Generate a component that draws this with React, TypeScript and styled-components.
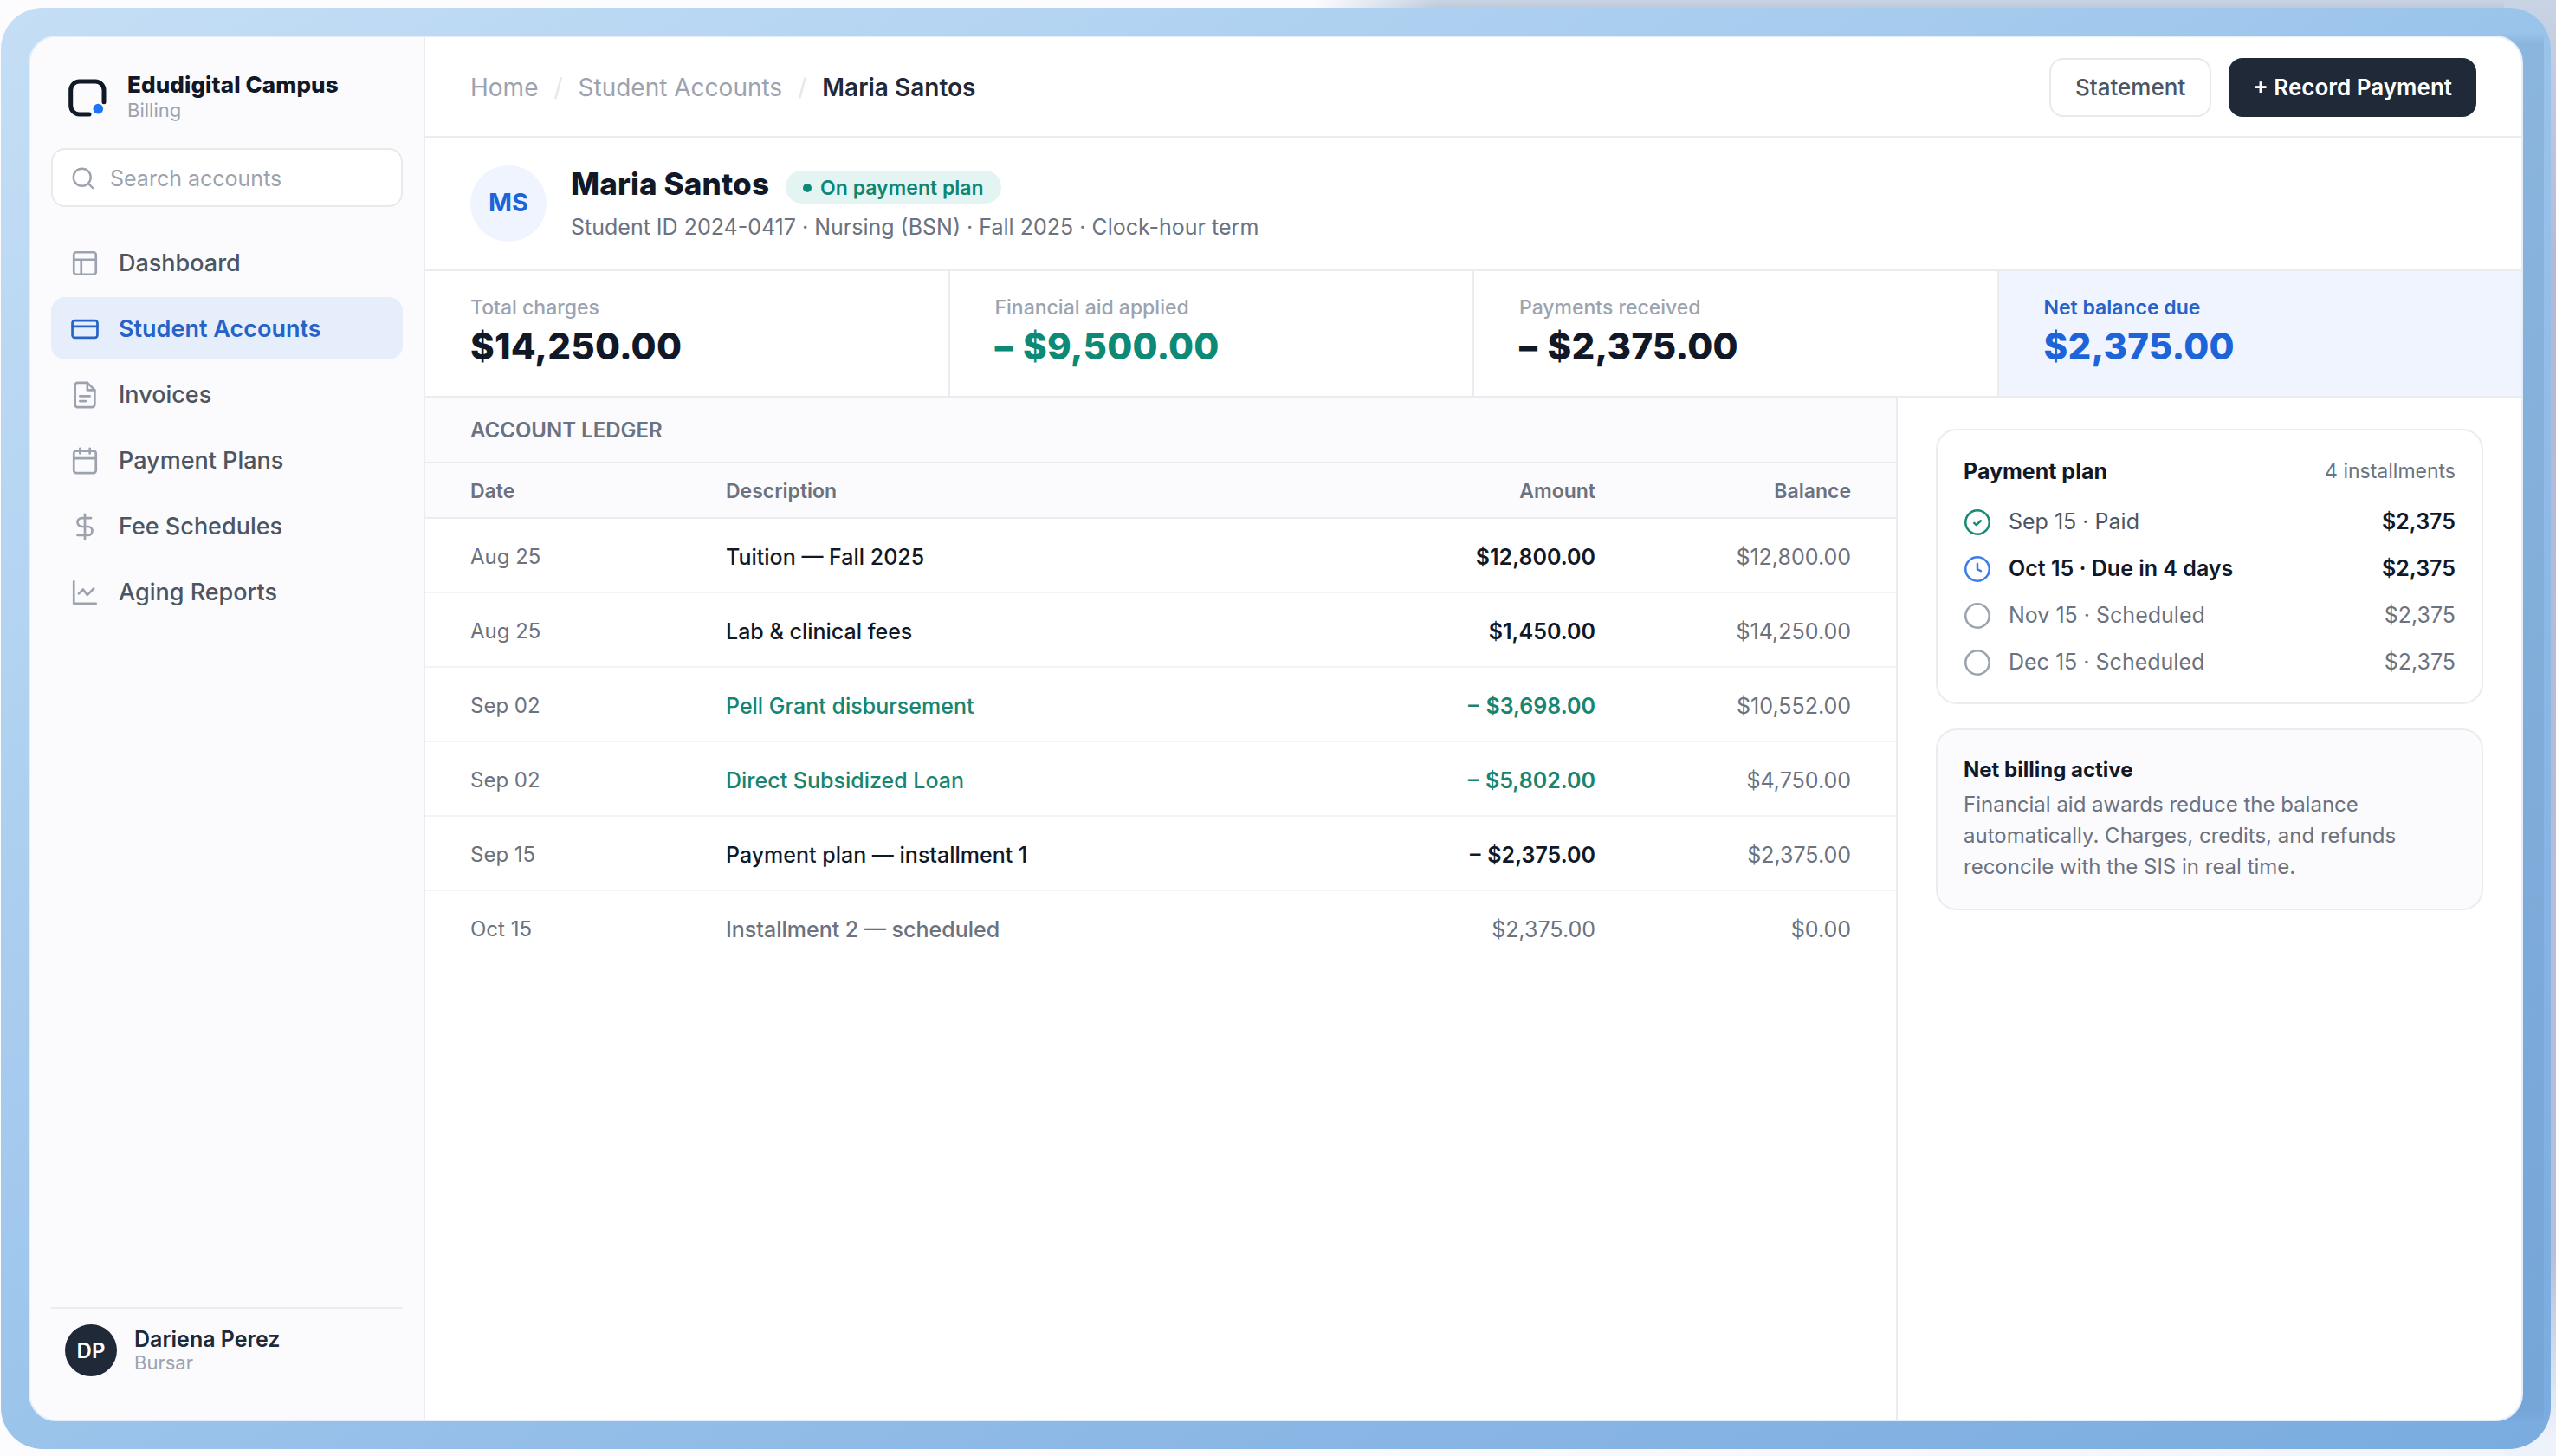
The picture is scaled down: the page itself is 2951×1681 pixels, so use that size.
import styled, { createGlobalStyle, css } from "styled-components";

const GlobalStyle = createGlobalStyle`
  * {
    box-sizing: border-box;
  }

  body {
    margin: 0;
    background: #fcfcfe;
    font-family: Inter, "Liberation Sans", sans-serif;
    color: #111827;
    -webkit-font-smoothing: antialiased;
  }
`;

const Backdrop = styled.div`
  width: 2951px;
  height: 1681px;
  padding: 9px 6px 8px 1px;
  overflow: hidden;
  background:
    linear-gradient(180deg, #c8d3e4 0, #b3bad8 300px, #b7bfdc 1450px, #eef2fa 1660px) 100% 0 / 60px 100% no-repeat,
    linear-gradient(90deg, #fcfcfe 1515px, rgba(252, 252, 254, 0) 1660px) 0 0 / 100% 60px no-repeat,
    linear-gradient(180deg, #c8d3e4 0, #bec8dc 10px) 0 0 / 100% 60px no-repeat,
    linear-gradient(90deg, #fcfcfe 40%, #f1f4fb);
`;

const Frame = styled.div`
  position: relative;
  height: 1664px;
  padding: 32px;
  border-radius: 48px;
  background: linear-gradient(to bottom right, #c5def5 0%, #b0d2f1 25%, #9bc4eb 50%, #8ab6e5 75%, #7aacdf 100%);

  &::after {
    content: "";
    position: absolute;
    top: 28px;
    right: 8px;
    bottom: 30px;
    width: 50px;
    background: linear-gradient(180deg, rgba(86, 130, 170, 0), rgba(86, 130, 170, 0.22) 14px, rgba(86, 130, 170, 0.16) calc(100% - 14px), rgba(86, 130, 170, 0));
  }
`;

const Window = styled.div`
  position: relative;
  z-index: 1;
  display: flex;
  height: 1600px;
  border: 2px solid #e4eefa;
  border-radius: 32px;
  background: #fff;
  overflow: hidden;
`;

const Sidebar = styled.aside`
  display: flex;
  flex-direction: column;
  width: 456px;
  padding: 36px 24px 50px;
  border-right: 2px solid #ebecef;
  background: #fbfbfd;
`;

const Brand = styled.div`
  display: flex;
  align-items: center;
  gap: 20px;
  height: 60px;
  padding-left: 16px;
`;

const BrandText = styled.div`
  padding-top: 2px;
`;

const BrandName = styled.div`
  font-size: 26px;
  font-weight: 800;
  line-height: 33px;
  letter-spacing: 0.1px;
`;

const SmallNote = styled.div`
  font-size: 22px;
  line-height: 26px;
  color: #9ca3af;
`;

const Search = styled.div`
  display: flex;
  align-items: center;
  gap: 16px;
  height: 68px;
  margin: 32px 0 28px;
  padding: 1px 20px 0;
  border: 2px solid #e8e9ec;
  border-radius: 16px;
  background: #fff;
  font-size: 25px;
  color: #9ca3af;
`;

const Nav = styled.nav`
  display: flex;
  flex-direction: column;
  gap: 4px;
`;

const NavItem = styled.a<{ $active?: boolean }>`
  display: flex;
  align-items: center;
  gap: 22px;
  height: 72px;
  padding: 1px 22px 0;
  border-radius: 16px;
  font-size: 27px;
  font-weight: 500;
  color: #4b5563;

  svg {
    color: #9ca3af;
  }

  ${({ $active }) =>
    $active &&
    css`
      background: #e7eefb;
      font-weight: 600;
      color: #2563c9;

      svg {
        color: #2563c9;
      }
    `}
`;

const Profile = styled.div`
  display: flex;
  align-items: center;
  gap: 20px;
  margin-top: auto;
  padding: 18px 16px 0;
  border-top: 2px solid #ebecef;
`;

const ProfileAvatar = styled.div`
  display: grid;
  place-items: center;
  width: 60px;
  height: 60px;
  border-radius: 50%;
  background: #1f2937;
  font-size: 24px;
  font-weight: 600;
  color: #fff;
`;

const ProfileName = styled.div`
  font-size: 25px;
  font-weight: 600;
  line-height: 28px;
  color: #1f2937;
`;

const Main = styled.main`
  display: flex;
  flex-direction: column;
  flex: 1;
`;

const TopBar = styled.header`
  display: flex;
  align-items: center;
  justify-content: space-between;
  height: 116px;
  padding: 2px 52px 0;
  border-bottom: 2px solid #ebecef;
`;

const Breadcrumb = styled.div`
  display: flex;
  gap: 18px;
  font-size: 28px;
  color: #9ca3af;

  i {
    font-style: normal;
    color: #e5e7eb;
  }

  b {
    font-weight: 600;
    color: #1f2937;
  }
`;

const Actions = styled.div`
  display: flex;
  gap: 20px;
`;

const Button = styled.button<{ $primary?: boolean }>`
  height: 68px;
  padding: 0 ${({ $primary }) => ($primary ? 26 : 28)}px 2px;
  border: 2px solid ${({ $primary }) => ($primary ? "#1f2937" : "#e8e9ec")};
  border-radius: 16px;
  background: ${({ $primary }) => ($primary ? "#1f2937" : "#fff")};
  font-family: inherit;
  font-size: 26px;
  font-weight: ${({ $primary }) => ($primary ? 600 : 500)};
  color: ${({ $primary }) => ($primary ? "#fff" : "#4b5563")};
  white-space: nowrap;
`;

const StudentHeader = styled.section`
  display: flex;
  align-items: center;
  gap: 28px;
  height: 154px;
  padding: 0 52px;
  border-bottom: 2px solid #ebecef;
`;

const StudentAvatar = styled.div`
  display: grid;
  place-items: center;
  width: 88px;
  height: 88px;
  padding-bottom: 4px;
  border-radius: 50%;
  background: #eff4fe;
  font-size: 29px;
  font-weight: 700;
  color: #1d64d8;
`;

const StudentInfo = styled.div`
  padding-bottom: 2px;
`;

const NameRow = styled.div`
  display: flex;
  align-items: flex-start;
  gap: 19px;
`;

const StudentName = styled.h1`
  margin: 0;
  font-size: 35px;
  font-weight: 800;
  line-height: 44px;
  letter-spacing: 0.15px;
`;

const Badge = styled.span`
  display: flex;
  align-items: center;
  gap: 10px;
  height: 38px;
  margin-top: 7px;
  padding: 1px 20px 0;
  border-radius: 19px;
  background: #e3f4f2;
  font-size: 23px;
  font-weight: 600;
  color: #0f8573;

  &::before {
    content: "";
    width: 10px;
    height: 10px;
    border-radius: 50%;
    background: #0d8a76;
  }
`;

const StudentMeta = styled.div`
  margin-top: 11px;
  font-size: 25px;
  line-height: 32px;
  color: #6b7280;
`;

const Stats = styled.section`
  display: grid;
  grid-template-columns: repeat(4, 1fr);
  gap: 2px;
  height: 146px;
  border-bottom: 2px solid #ebecef;
  background: #ebecef;
`;

const Stat = styled.div<{ $tone?: "green" | "blue" }>`
  padding: 28px 52px 0;
  color: ${({ $tone }) => ($tone === "green" ? "#0d8a76" : $tone === "blue" ? "#1d64d8" : "#111827")};
  background: ${({ $tone }) => ($tone === "blue" ? "#eff4fe" : "#fff")};
`;

const StatLabel = styled.div<{ $strong?: boolean }>`
  font-size: 23px;
  font-weight: ${({ $strong }) => ($strong ? 600 : 500)};
  line-height: 28px;
  color: ${({ $strong }) => ($strong ? "#2563c9" : "#9ca3af")};
`;

const StatValue = styled.div`
  margin-top: 3px;
  font-size: 42px;
  font-weight: 800;
  line-height: 56px;
  letter-spacing: 0.2px;
  word-spacing: 2px;
`;

const Content = styled.div`
  display: flex;
  flex: 1;
`;

const Ledger = styled.section`
  flex: 1;
  border-right: 2px solid #ebecef;
`;

const LedgerTitle = styled.div`
  height: 76px;
  padding: 1px 52px 0;
  border-bottom: 2px solid #ebecef;
  background: #fbfbfd;
  font-size: 24px;
  font-weight: 600;
  line-height: 74px;
  color: #6b7280;
`;

const LedgerGrid = styled.div`
  display: grid;
  grid-template-columns: 295px 1fr 295px 295px;
  align-items: center;
  padding: 1px 52px 0;

  & > :nth-child(n + 3) {
    text-align: right;
  }
`;

const LedgerHead = styled(LedgerGrid)`
  height: 64px;
  border-bottom: 2px solid #ebecef;
  background: #fbfbfd;
  font-size: 23px;
  font-weight: 600;
  color: #6b7280;
`;

const toneColors = {
  dark: "#111827",
  green: "#17856f",
  muted: "#6b7280",
};

const LedgerRow = styled(LedgerGrid)<{ $tone: keyof typeof toneColors }>`
  height: 86px;
  padding-top: 3px;
  border-bottom: 2px solid #f2f3f5;
  font-size: 25px;
  color: #6b7280;

  &:last-child {
    border-bottom-color: transparent;
  }

  & > :nth-child(1) {
    font-size: 24px;
  }

  & > :nth-child(2) {
    font-weight: 500;
    color: ${({ $tone }) => toneColors[$tone]};
  }

  & > :nth-child(3) {
    font-weight: ${({ $tone }) => ($tone === "muted" ? 400 : 600)};
    color: ${({ $tone }) => toneColors[$tone]};
    word-spacing: 1.5px;
  }
`;

const SidePanel = styled.aside`
  display: flex;
  flex-direction: column;
  gap: 28px;
  width: 720px;
  padding: 36px 44px;
`;

const Card = styled.div<{ $soft?: boolean }>`
  height: ${({ $soft }) => ($soft ? 210 : 318)}px;
  padding: ${({ $soft }) => ($soft ? 29 : 28)}px 30px;
  border: 2px solid #ebecef;
  border-radius: 24px;
  background: ${({ $soft }) => ($soft ? "#fbfbfd" : "#fff")};
`;

const CardHead = styled.div`
  display: flex;
  justify-content: space-between;
  align-items: center;
  height: 38px;
  margin-bottom: 12px;
  font-size: 23px;
  color: #6b7280;
`;

const CardTitle = styled.div<{ $small?: boolean }>`
  font-size: ${({ $small }) => ($small ? 24 : 25)}px;
  font-weight: 700;
  line-height: 34px;
  color: #111827;
`;

const Installment = styled.div<{ $color?: string; $strongLabel?: boolean; $strongAmount?: boolean }>`
  display: flex;
  align-items: center;
  height: 54px;
  font-size: 25px;
  font-weight: ${({ $strongLabel }) => ($strongLabel ? 600 : 400)};
  color: ${({ $color }) => $color || "#6b7280"};

  svg {
    margin: 2px 20px 0 0;
  }

  span {
    margin-left: auto;
    font-weight: ${({ $strongAmount }) => ($strongAmount ? 600 : 400)};
    color: ${({ $strongAmount }) => ($strongAmount ? "#111827" : "#6b7280")};
  }
`;

const CardText = styled.p`
  margin: 5px 0 0;
  font-size: 24px;
  line-height: 36px;
  color: #6b7280;
`;

const icons = {
  dashboard: (
    <>
      <rect x="3" y="3" width="18" height="18" rx="2" />
      <path d="M3 9h18M9 9v12" />
    </>
  ),
  card: (
    <>
      <rect x="1.8" y="5" width="20.4" height="14" rx="2" />
      <path d="M1.8 9.8h20.4" />
    </>
  ),
  file: (
    <>
      <path d="M14 2H6a2 2 0 0 0-2 2v16a2 2 0 0 0 2 2h12a2 2 0 0 0 2-2V8z" />
      <path d="M14 2v6h6M8 13h8M8 17h4.7" />
    </>
  ),
  calendar: (
    <>
      <rect x="3" y="4" width="18" height="18" rx="2" />
      <path d="M3 10h18M8 2v4M16 2v4" />
    </>
  ),
  dollar: <path d="M12 2v20M17 5H9.5a3.5 3.5 0 0 0 0 7h5a3.5 3.5 0 0 1 0 7H6" />,
  chart: <path d="M3 3v18h18M7 13l3.5-3.5L14 14l5.2-5.2" />,
  search: (
    <>
      <circle cx="11" cy="11" r="8" />
      <path d="m21 21-4.3-4.3" />
    </>
  ),
  paid: (
    <>
      <circle cx="12" cy="12" r="10.3" />
      <path d="m9.2 12.6 1.9 1.8 3.7-3.7" />
    </>
  ),
  due: (
    <>
      <circle cx="12" cy="12" r="10.3" />
      <path d="M12 7.4v4.8l2.9 1.4" />
    </>
  ),
  open: <circle cx="12" cy="12" r="10.3" />,
};

type IconName = keyof typeof icons;

function Icon({ name, size = 34, color = "currentColor", weight = 1.9 }: { name: IconName; size?: number; color?: string; weight?: number }) {
  return (
    <svg
      width={size}
      height={size}
      viewBox="0 0 24 24"
      fill="none"
      stroke={color}
      strokeWidth={weight}
      strokeLinecap="round"
      strokeLinejoin="round"
    >
      {icons[name]}
    </svg>
  );
}

function Logo() {
  return (
    <svg width="52" height="52" viewBox="0 0 52 52" fill="none">
      <path
        d="M45 34.8V21a10 10 0 0 0-10-10H16.7a10 10 0 0 0-10 10v18a10 10 0 0 0 10 10H28"
        stroke="#111827"
        strokeWidth="5"
        strokeLinecap="round"
      />
      <circle cx="38.3" cy="42.6" r="5.8" fill="#1d74fb" />
    </svg>
  );
}

const navItems: { icon: IconName; label: string }[] = [
  { icon: "dashboard", label: "Dashboard" },
  { icon: "card", label: "Student Accounts" },
  { icon: "file", label: "Invoices" },
  { icon: "calendar", label: "Payment Plans" },
  { icon: "dollar", label: "Fee Schedules" },
  { icon: "chart", label: "Aging Reports" },
];

const ledgerRows: { date: string; text: string; amount: string; balance: string; tone: keyof typeof toneColors }[] = [
  { date: "Aug 25", text: "Tuition — Fall 2025", amount: "$12,800.00", balance: "$12,800.00", tone: "dark" },
  { date: "Aug 25", text: "Lab & clinical fees", amount: "$1,450.00", balance: "$14,250.00", tone: "dark" },
  { date: "Sep 02", text: "Pell Grant disbursement", amount: "– $3,698.00", balance: "$10,552.00", tone: "green" },
  { date: "Sep 02", text: "Direct Subsidized Loan", amount: "– $5,802.00", balance: "$4,750.00", tone: "green" },
  { date: "Sep 15", text: "Payment plan — installment 1", amount: "– $2,375.00", balance: "$2,375.00", tone: "dark" },
  { date: "Oct 15", text: "Installment 2 — scheduled", amount: "$2,375.00", balance: "$0.00", tone: "muted" },
];

function App() {
  return (
    <>
      <GlobalStyle />
      <Backdrop>
        <Frame>
          <Window>
            <Sidebar>
              <Brand>
                <Logo />
                <BrandText>
                  <BrandName>Edudigital Campus</BrandName>
                  <SmallNote>Billing</SmallNote>
                </BrandText>
              </Brand>
              <Search>
                <Icon name="search" size={30} />
                Search accounts
              </Search>
              <Nav>
                {navItems.map((item) => (
                  <NavItem key={item.label} $active={item.label === "Student Accounts"}>
                    <Icon name={item.icon} />
                    {item.label}
                  </NavItem>
                ))}
              </Nav>
              <Profile>
                <ProfileAvatar>DP</ProfileAvatar>
                <div>
                  <ProfileName>Dariena Perez</ProfileName>
                  <SmallNote>Bursar</SmallNote>
                </div>
              </Profile>
            </Sidebar>
            <Main>
              <TopBar>
                <Breadcrumb>
                  <span>Home</span>
                  <i>/</i>
                  <span>Student Accounts</span>
                  <i>/</i>
                  <b>Maria Santos</b>
                </Breadcrumb>
                <Actions>
                  <Button>Statement</Button>
                  <Button $primary>+ Record Payment</Button>
                </Actions>
              </TopBar>
              <StudentHeader>
                <StudentAvatar>MS</StudentAvatar>
                <StudentInfo>
                  <NameRow>
                    <StudentName>Maria Santos</StudentName>
                    <Badge>On payment plan</Badge>
                  </NameRow>
                  <StudentMeta>Student ID 2024-0417 · Nursing (BSN) · Fall 2025 · Clock-hour term</StudentMeta>
                </StudentInfo>
              </StudentHeader>
              <Stats>
                <Stat>
                  <StatLabel>Total charges</StatLabel>
                  <StatValue>$14,250.00</StatValue>
                </Stat>
                <Stat $tone="green">
                  <StatLabel>Financial aid applied</StatLabel>
                  <StatValue>– $9,500.00</StatValue>
                </Stat>
                <Stat>
                  <StatLabel>Payments received</StatLabel>
                  <StatValue>– $2,375.00</StatValue>
                </Stat>
                <Stat $tone="blue">
                  <StatLabel $strong>Net balance due</StatLabel>
                  <StatValue>$2,375.00</StatValue>
                </Stat>
              </Stats>
              <Content>
                <Ledger>
                  <LedgerTitle>ACCOUNT LEDGER</LedgerTitle>
                  <LedgerHead>
                    <div>Date</div>
                    <div>Description</div>
                    <div>Amount</div>
                    <div>Balance</div>
                  </LedgerHead>
                  {ledgerRows.map((row) => (
                    <LedgerRow key={row.text} $tone={row.tone}>
                      <div>{row.date}</div>
                      <div>{row.text}</div>
                      <div>{row.amount}</div>
                      <div>{row.balance}</div>
                    </LedgerRow>
                  ))}
                </Ledger>
                <SidePanel>
                  <Card>
                    <CardHead>
                      <CardTitle>Payment plan</CardTitle>
                      4 installments
                    </CardHead>
                    <Installment $color="#4b5563" $strongAmount>
                      <Icon name="paid" size={32} color="#178a74" />
                      Sep 15 · Paid
                      <span>$2,375</span>
                    </Installment>
                    <Installment $color="#111827" $strongLabel $strongAmount>
                      <Icon name="due" size={32} color="#3b7ded" />
                      Oct 15 · Due in 4 days
                      <span>$2,375</span>
                    </Installment>
                    <Installment>
                      <Icon name="open" size={32} color="#9ca3af" />
                      Nov 15 · Scheduled
                      <span>$2,375</span>
                    </Installment>
                    <Installment>
                      <Icon name="open" size={32} color="#9ca3af" />
                      Dec 15 · Scheduled
                      <span>$2,375</span>
                    </Installment>
                  </Card>
                  <Card $soft>
                    <CardTitle $small>Net billing active</CardTitle>
                    <CardText>
                      Financial aid awards reduce the balance automatically. Charges, credits, and refunds reconcile with
                      the SIS in real time.
                    </CardText>
                  </Card>
                </SidePanel>
              </Content>
            </Main>
          </Window>
        </Frame>
      </Backdrop>
    </>
  );
}

export default App;
